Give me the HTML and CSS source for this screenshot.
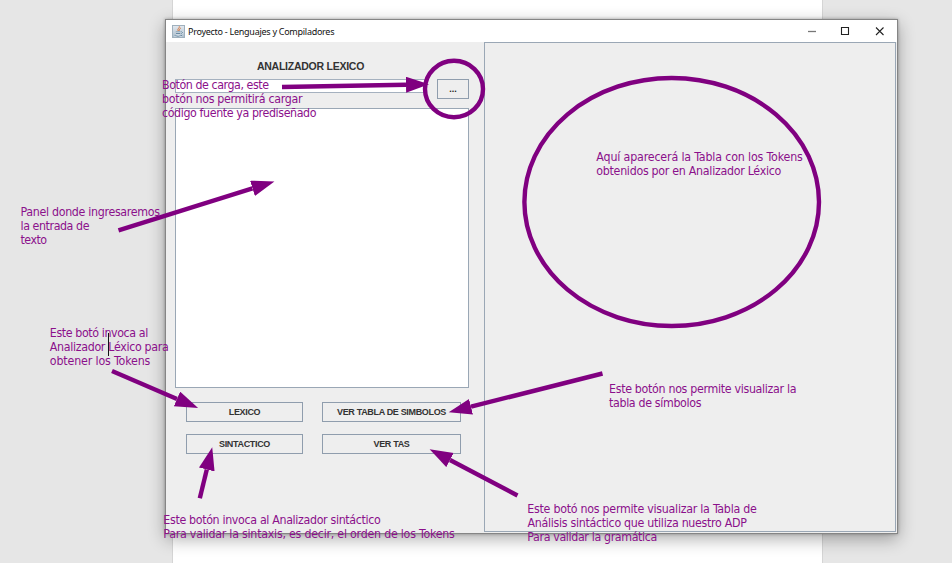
FILE: index.html
```html
<!DOCTYPE html>
<html lang="es">
<head>
<meta charset="utf-8">
<title>Proyecto - Lenguajes y Compiladores</title>
<link rel="stylesheet" href="styles.css">
</head>
<body>
<main class="desk">
  <div class="sheet">
  <section class="window">
    <header class="titlebar">
      <svg class="java" viewBox="0 0 13 13">
        <defs><linearGradient id="tile" x2="0" y2="1"><stop offset="0" stop-color="#e4e9ef"/><stop offset="1" stop-color="#a9bccb"/></linearGradient></defs>
        <rect x=".5" y=".5" width="12" height="12" fill="url(#tile)" stroke="#9fb0bd"/>
        <path d="M7.3 1.3C8 3 4.8 3.6 6.2 6M8.8 3C6.8 4 8 4.8 6.8 6.1" fill="none" stroke="#d9773c" stroke-width="1"/>
        <path d="M3.6 6.9H8.8M4 8.6H8.3M2.5 10.7Q6 12 10 10.5M9 6.9C11.3 6.3 11 8.5 9 8.8" fill="none" stroke="#fff" stroke-width="1.6"/>
        <path d="M3.6 6.9H8.8M4 8.6H8.3M2.5 10.7Q6 12 10 10.5M9 6.9C11.3 6.3 11 8.5 9 8.8" fill="none" stroke="#48718f" stroke-width=".9"/>
      </svg>
      <h1 class="caption">Proyecto - Lenguajes y Compiladores</h1>
      <svg class="controls" viewBox="0 0 80 12" fill="none">
        <path d="M1 6.5H9" stroke="#777" stroke-width="1.3"/>
        <path d="M34.500 2.5H41.500V9.5H34.500Z" stroke="#222" stroke-width="1.1"/>
        <path d="M69 2.5L76.5 10M76.5 2.5L69 10" stroke="#222" stroke-width="1.1"/>
      </svg>
    </header>
    <div class="content">
      <div class="left">
        <h2 class="heading">ANALIZADOR LEXICO</h2>
        <div class="load"><div class="path"></div><button class="btn browse">...</button></div>
        <div class="source"></div>
        <div class="actions">
          <button class="btn">LEXICO</button>
          <button class="btn">VER TABLA DE SIMBOLOS</button>
          <button class="btn">SINTACTICO</button>
          <button class="btn">VER TAS</button>
        </div>
      </div>
      <div class="right"></div>
    </div>
  </section>
  </div>
  <svg class="notes" viewBox="0 0 952 563">
    <defs>
      <marker id="head" markerUnits="userSpaceOnUse" markerWidth="24" markerHeight="18" refX="0" refY="8" orient="auto"><path d="M0 0L23 8L0 16Z"/></marker>
    </defs>
    <g class="ink">
      <ellipse cx="454" cy="89" rx="29" ry="28.2"/>
      <ellipse cx="671.7" cy="202" rx="147.3" ry="124"/>
      <path d="M282 87L406 84.7"/>
      <path d="M118.500 230.300L252.500 188.300"/>
      <path d="M112 371L177 399"/>
      <path d="M602.500 373.500L471 406.700"/>
      <path d="M199.800 498.300L206.800 469.500"/>
      <path d="M517.500 495.500L450 460"/>
    </g>
    <path class="caret" d="M108.500 333V356"/>
    <g class="words">
      <text x="162" y="88.500" textLength="107">Botón de carga, este</text>
      <text x="162" y="102.500" textLength="140.500">botón nos permitirá cargar</text>
      <text x="162" y="116.500" textLength="154.500">código fuente ya prediseñado</text>
      <text x="20.500" y="216.300" textLength="139.500">Panel donde ingresaremos</text>
      <text x="20.500" y="230.300" textLength="69">la entrada de</text>
      <text x="20.500" y="244.400" textLength="26.500">texto</text>
      <text x="49.800" y="337.300" textLength="98.500">Este botó invoca al</text>
      <text x="49.800" y="351.300" textLength="119">Analizador Léxico para</text>
      <text x="49.800" y="365.300" textLength="100.500">obtener los Tokens</text>
      <text x="163.300" y="524.400" textLength="217.500">Este botón invoca al Analizador sintáctico</text>
      <text x="163.300" y="538.400" textLength="291.500">Para validar la sintaxis, es decir, el orden de los Tokens</text>
      <text x="527.300" y="513.300" textLength="229.500">Este botó nos permite visualizar la Tabla de</text>
      <text x="527.500" y="527.300" textLength="219.500">Análisis sintáctico que utiliza nuestro ADP</text>
      <text x="527.300" y="541.300" textLength="130">Para validar la gramática</text>
      <text x="596.300" y="161.300" textLength="206.500">Aquí aparecerá la Tabla con los Tokens</text>
      <text x="596.300" y="175.300" textLength="185">obtenidos por en Analizador Léxico</text>
      <text x="609" y="393" textLength="187.500">Este botón nos permite visualizar la</text>
      <text x="609" y="407" textLength="92.500">tabla de símbolos</text>
    </g>
  </svg>
</main>
</body>
</html>
```
FILE: styles.css
```css
* { box-sizing: border-box; }
body { margin: 0; background: #e6e6e6; font-family: "Liberation Sans", Arial, sans-serif; }
.desk { position: relative; width: 952px; height: 563px; overflow: hidden; }
.sheet { width: 651px; height: 563px; margin-left: 172px; padding-top: 19px; background: #fff; border: solid #d5d5d5; border-width: 0 1px; }
.window { display: flex; flex-direction: column; width: 733px; height: 515px; margin-left: -8px; background: #eee; border: 1px solid #858585; box-shadow: 0 5px 16px rgba(0,0,0,.32), 0 0 3px rgba(0,0,0,.3); }
.titlebar { display: flex; align-items: center; flex: none; height: 22px; padding: 0 10px 0 6px; background: #fff; }
.java { width: 13px; height: 13px; margin-right: 3px; }
.caption { margin: 0; font: 9px "Noto Sans", sans-serif; color: #111; white-space: nowrap; letter-spacing: -.27px; }
.controls { width: 80px; height: 12px; margin-left: auto; }
.content { display: flex; flex: 1; min-height: 0; }
.left { width: 318px; padding: 18px 15px 0 9px; }
.heading { margin: 0; padding-right: 23px; font-size: 10.500px; line-height: 12px; letter-spacing: -.25px; text-align: center; color: #333; }
.load { display: flex; justify-content: space-between; align-items: flex-start; height: 29px; margin-top: 7px; }
.path { width: 250px; height: 14px; background: #fff; border: 1px solid #a5b1bf; }
.btn { padding: 0; background: #eee; border: 1px solid #8f9dad; font: bold 9px "Liberation Sans", Arial, sans-serif; letter-spacing: -.33px; color: #333; white-space: nowrap; height: 20px; }
.browse { width: 32px; color: #222; letter-spacing: 0; }
.source { height: 280px; background: #fff; border: 1px solid #9aa7b5; }
.actions { display: grid; grid-template-columns: 117px 139px; column-gap: 19px; row-gap: 12px; margin: 14px 0 0 11px; }
.right { flex: 1; margin: 0 1px 1px 0; border: 1px solid #9aa7b5; }
.notes { position: absolute; inset: 0; width: 952px; height: 563px; }
.ink { fill: none; stroke: #800080; stroke-width: 4.400px; }
.ink path { marker-end: url(#head); }
#head path { fill: #800080; stroke: none; marker-end: none; }
.caret { stroke: #111; stroke-width: 1px; }
.words { fill: #8b108b; font: 12.300px "DejaVu Sans Condensed", "DejaVu Sans", sans-serif; font-stretch: condensed; }
```
